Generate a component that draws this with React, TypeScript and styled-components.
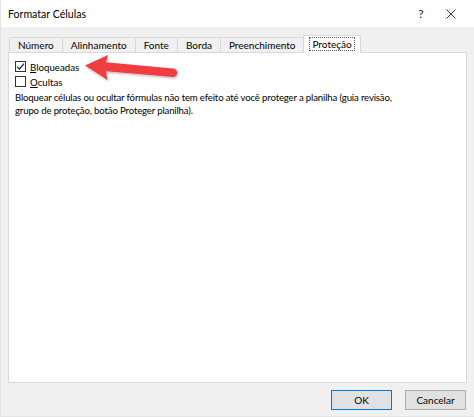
import React from "react";
import styled, { createGlobalStyle } from "styled-components";

const Global = createGlobalStyle`
  html, body { margin: 0; padding: 0; background: #f0f0f0; }
  body { font-family: Lato, "Noto Sans", sans-serif; color: #000; }
`;

const Window = styled.div`
  position: relative;
  width: 474px;
  height: 417px;
  box-sizing: border-box;
  display: flex;
  flex-direction: column;
  background: #f0f0f0;
  border-left: 1px solid #e4e4e4;
  border-bottom: 1px solid #e4e4e4;
  overflow: hidden;
`;

const TitleBar = styled.div`
  height: 27px;
  flex: none;
  background: #ffffff;
  display: flex;
  align-items: center;
  padding-left: 7px;
  padding-right: 16px;
`;

const Title = styled.span`
  font-size: 10.6px;
  color: #000;
  flex: 1;
`;

const TitleButton = styled.span<{ $w: number }>`
  width: ${(p) => p.$w}px;
  display: flex;
  justify-content: center;
  align-items: center;
  font-size: 12px;
  color: #222;
`;

const TabStrip = styled.div`
  display: flex;
  align-items: flex-end;
  height: 26px;
  box-sizing: border-box;
  padding-left: 8px;
  margin-bottom: -1px;
  position: relative;
  z-index: 1;
`;

const Tab = styled.div<{ $active?: boolean }>`
  box-sizing: border-box;
  height: ${(p) => (p.$active ? 18 : 16)}px;
  padding: 0 ${(p) => (p.$active ? 5 : 8)}px;
  margin: 0 ${(p) => (p.$active ? -2 : 0)}px;
  margin-left: -1px;
  display: flex;
  align-items: center;
  font-size: 10px;
  color: #000;
  background: ${(p) => (p.$active ? "#ffffff" : "#f0f0f0")};
  border: 1px solid #d9d9d9;
  border-bottom: ${(p) => (p.$active ? "1px solid #ffffff" : "1px solid #d9d9d9")};
  &:first-child { margin-left: 0; }
`;

const FocusRect = styled.span`
  border: 1px dotted #555;
  padding: 0 2px;
  line-height: 12px;
`;

const Panel = styled.div`
  flex: none;
  height: 331px;
  box-sizing: border-box;
  margin: 0 7px 0 7px;
  background: #ffffff;
  border: 1px solid #d9d9d9;
  padding: 6px 0 0 6px;
  display: flex;
  flex-direction: column;
`;

const CheckRow = styled.label`
  display: flex;
  align-items: center;
  gap: 4px;
  height: 15px;
  font-size: 9.7px;
`;

const Box = styled.span`
  width: 11px;
  height: 11px;
  box-sizing: border-box;
  border: 1px solid #333;
  background: #fff;
  display: flex;
  align-items: center;
  justify-content: center;
`;

const Key = styled.span`
  text-decoration: underline;
  text-underline-offset: 1px;
`;

const Description = styled.p`
  margin: 2px 0 0 0;
  font-size: 9.6px;
  letter-spacing: -0.15px;
  line-height: 13px;
  width: 440px;
`;

const Footer = styled.div`
  flex: 1;
  display: flex;
  justify-content: flex-end;
  align-items: flex-start;
  padding: 7px 8px 0 0;
  gap: 13px;
`;

const Button = styled.button<{ $default?: boolean }>`
  width: 61px;
  height: 20px;
  box-sizing: border-box;
  background: #e1e1e1;
  border: 1px solid ${(p) => (p.$default ? "#0078d7" : "#adadad")};
  font-family: inherit;
  font-size: 10px;
  color: #000;
  padding: 0;
`;

const ArrowLayer = styled.svg`
  position: absolute;
  left: 0;
  top: 0;
  pointer-events: none;
`;

function Check() {
  return (
    <svg width="9" height="9" viewBox="0 0 9 9">
      <path d="M1 4.6 L3.4 7 L8 1.6" fill="none" stroke="#222" strokeWidth="1.2" />
    </svg>
  );
}

export default function App() {
  const tabs = ["Número", "Alinhamento", "Fonte", "Borda", "Preenchimento"];
  return (
    <>
      <Global />
      <Window>
        <TitleBar>
          <Title>Formatar Células</Title>
          <TitleButton $w={14}>?</TitleButton>
          <TitleButton $w={30}>
            <svg width="10" height="10" viewBox="0 0 10 10" style={{ marginLeft: 16 }}>
              <path d="M0.5 0.5 L9.5 9.5 M9.5 0.5 L0.5 9.5" stroke="#333" strokeWidth="1" />
            </svg>
          </TitleButton>
        </TitleBar>
        <TabStrip>
          {tabs.map((t) => (
            <Tab key={t}>{t}</Tab>
          ))}
          <Tab $active>
            <FocusRect>Proteção</FocusRect>
          </Tab>
        </TabStrip>
        <Panel>
          <CheckRow>
            <Box>
              <Check />
            </Box>
            <span>
              <Key>B</Key>loqueadas
            </span>
          </CheckRow>
          <CheckRow>
            <Box />
            <span>
              <Key>O</Key>cultas
            </span>
          </CheckRow>
          <Description>
            Bloquear células ou ocultar fórmulas não tem efeito até você proteger a planilha (guia revisão,
            <br />
            grupo de proteção, botão Proteger planilha).
          </Description>
        </Panel>
        <Footer>
          <Button $default>OK</Button>
          <Button>Cancelar</Button>
        </Footer>
        <ArrowLayer width="474" height="417" viewBox="0 0 474 417">
          <defs>
            <filter id="sh" x="-20%" y="-40%" width="140%" height="180%">
              <feDropShadow dx="1" dy="1.5" stdDeviation="1.2" floodColor="#000" floodOpacity="0.25" />
            </filter>
          </defs>
          <g filter="url(#sh)" fill="#ef3e42">
            <path d="M102 62 L172 68.5 L172 77 L102 71 Z" />
            <circle cx="172" cy="72.7" r="4.3" />
            <path d="M84 65.5 L107 55 L104 66 L106.5 80 Z" />
          </g>
        </ArrowLayer>
      </Window>
    </>
  );
}
